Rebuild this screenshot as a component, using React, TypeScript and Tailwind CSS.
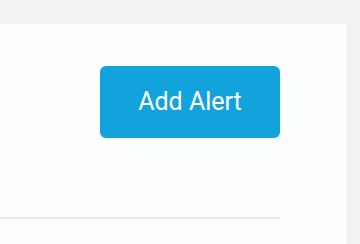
export default function App() {
  return (
    <div className="h-[244px] w-[360px] overflow-hidden bg-[#f2f2f2] pt-[24px] pr-[14px]" style={{ fontFamily: "Roboto, sans-serif" }}>
      <div className="h-[220px] bg-[#fcfdfd] pr-[66px]">
        <div className="flex justify-end pt-[42px]">
          <button className="h-[72px] w-[180px] rounded-[6px] bg-[#12a3dc] text-[25px] text-white">
            Add Alert
          </button>
        </div>
        <div className="mt-[79px] h-[2px] bg-[#e8e9ee]" />
      </div>
    </div>
  );
}
